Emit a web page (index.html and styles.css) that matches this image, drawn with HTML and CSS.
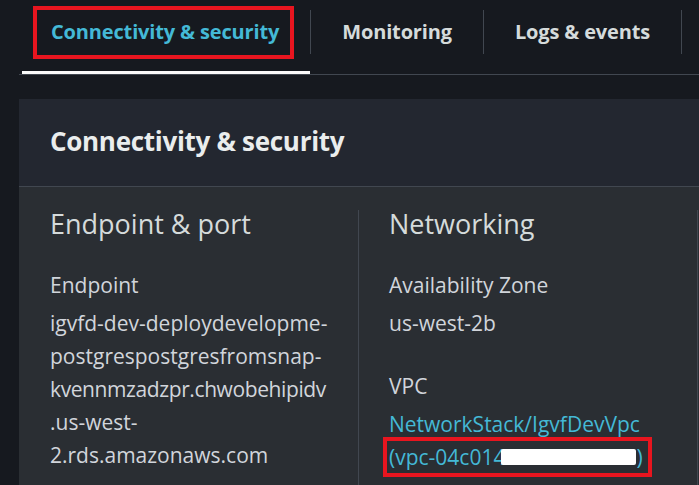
FILE: index.html
```html
<!DOCTYPE html>
<html>
<head>
<meta charset="utf-8">
<link rel="stylesheet" href="styles.css">
</head>
<body>
<div class="page">
  <nav class="tabs">
    <div class="tab tab-first tab-active"><span class="tab-label">Connectivity &amp; security</span><span class="annot annot-tab"></span></div>
    <div class="tab-sep"></div>
    <div class="tab"><span class="tab-label">Monitoring</span></div>
    <div class="tab-sep"></div>
    <div class="tab"><span class="tab-label">Logs &amp; events</span></div>
    <div class="tab-sep"></div>
  </nav>
  <section class="panel">
    <header class="panel-header"><h2 class="panel-title">Connectivity &amp; security</h2></header>
    <div class="panel-body">
      <div class="col">
        <h3 class="col-title">Endpoint &amp; port</h3>
        <div class="kv">
          <div class="kv-label">Endpoint</div>
          <div class="kv-value">igvfd-dev-deploydevelopme-<br>postgrespostgresfromsnap-<br><span class="tight">kvennmzadzpr.chwobehipidv</span><br>.us-west-<br>2.rds.amazonaws.com</div>
        </div>
      </div>
      <div class="col col-div">
        <h3 class="col-title">Networking</h3>
        <div class="kv">
          <div class="kv-label">Availability Zone</div>
          <div class="kv-value">us-west-2b</div>
        </div>
        <div class="kv">
          <div class="kv-label">VPC</div>
          <div class="kv-value"><a class="link">NetworkStack/IgvfDevVpc</a><br><span class="annotated"><a class="link">(vpc-04c014<span class="redact"></span>)</a><span class="annot annot-vpc"></span></span></div>
        </div>
      </div>
      <div class="col-rest"></div>
    </div>
  </section>
</div>
</body>
</html>
```
FILE: styles.css
```css
html, body {
  margin: 0;
  padding: 0;
  background: #16191f;
}
body {
  font-family: "Open Sans", "Noto Sans", sans-serif;
  color: #d1d5db;
  height: 485px;
  overflow: hidden;
}
.page {
  padding-left: 19px;
}
.tabs {
  display: flex;
  align-items: flex-start;
  height: 74px;
  border-bottom: 1px solid #414750;
  white-space: nowrap;
  overflow: hidden;
}
.tab {
  position: relative;
  flex-shrink: 0;
  padding: 15px 31px 23px;
  border-bottom: 3px solid transparent;
}
.tab-first {
  margin-left: 3px;
  padding-left: 29px;
}
.tab-label {
  display: block;
  font-size: 20px;
  line-height: 33px;
  font-weight: 700;
  letter-spacing: -0.15px;
  color: #d5dbdb;
}
.tab-active {
  border-bottom-color: #fafafa;
}
.tab-active .tab-label {
  color: #44b9d6;
}
.tab-sep {
  flex-shrink: 0;
  width: 1px;
  height: 44px;
  margin-top: 10px;
  background: #414750;
}
.annot {
  position: absolute;
  box-sizing: border-box;
  border: 4px solid #e8151f;
  pointer-events: none;
}
.annot-tab {
  left: 11px;
  top: 6px;
  width: 261px;
  height: 53px;
}
.panel {
  margin-top: 24px;
  background: #2a2e33;
  height: 386px;
}
.panel-header {
  background: #232730;
  padding: 26px 31px 28px;
  border-bottom: 1px solid #414750;
}
.panel-title {
  margin: 0;
  font-size: 26px;
  line-height: 33px;
  font-weight: 700;
  letter-spacing: -0.3px;
  color: #eaeded;
}
.panel-body {
  display: flex;
  padding-top: 23px;
  height: 275px;
}
.col {
  box-sizing: border-box;
  width: 339px;
  flex-shrink: 0;
  padding: 0 31px;
}
.col-div {
  border-left: 1px solid #414750;
  padding-left: 30px;
}
.col-rest {
  flex: 1;
  min-width: 0;
  border-left: 1px solid #414750;
}
.col-title {
  margin: 0;
  font-size: 27px;
  line-height: 27px;
  font-weight: 400;
  color: #d5dbdb;
}
.kv {
  margin-top: 30px;
  font-size: 21px;
  line-height: 33px;
}
.col-title + .kv {
  margin-top: 32px;
}
.kv-value {
  margin-top: 5px;
  white-space: nowrap;
}
.tight {
  letter-spacing: -0.4px;
}
.link {
  color: #44b9d6;
  text-decoration: none;
}
.annotated {
  position: relative;
  display: inline-block;
}
.annot-vpc {
  left: -6px;
  top: -4px;
  width: 269px;
  height: 40px;
}
.redact {
  display: inline-block;
  width: 135px;
  height: 16px;
  margin-left: -4px;
  background: #ffffff;
  border-radius: 2px;
}
```
